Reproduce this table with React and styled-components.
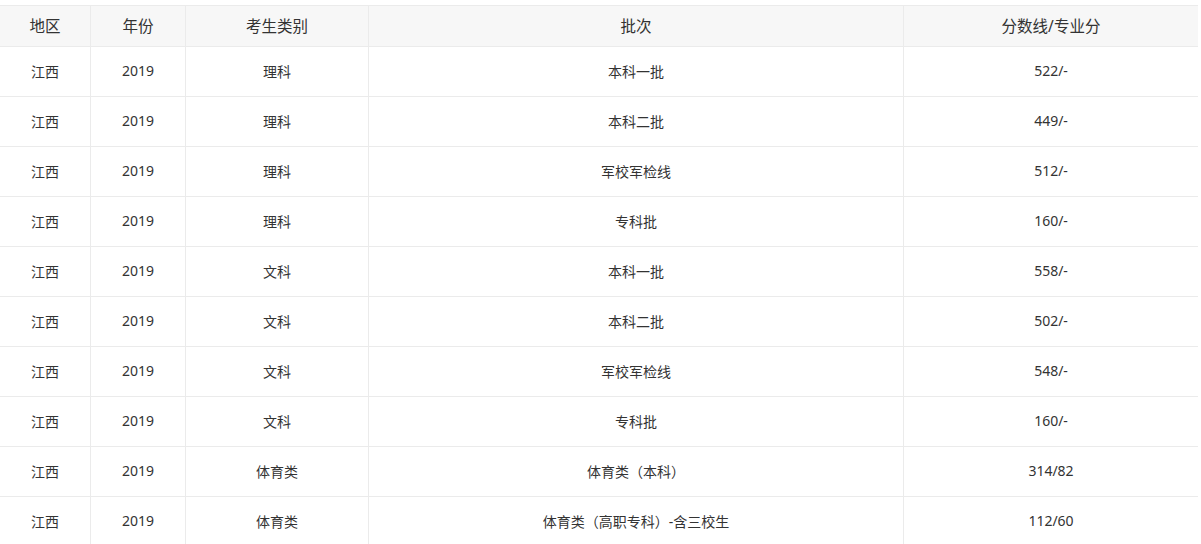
import React from "react";
import styled, { createGlobalStyle } from "styled-components";

const Global = createGlobalStyle`
  html, body { margin: 0; padding: 0; background: #fff; }
  body { font-family: "Noto Sans", "Noto Sans CJK SC", sans-serif; color: #333; }
`;

const Wrap = styled.div`
  padding-top: 5px;
  width: 1198px;
  overflow: hidden;
`;

const Table = styled.table`
  border-collapse: collapse;
  table-layout: fixed;
  width: 1199px;
  margin-left: -1px;
`;

const HeadCell = styled.th`
  height: 38px;
  padding: 0 0 2px;
  background: #f7f7f7;
  border: 1px solid #ebebeb;
  font-weight: normal;
  font-size: 15.5px;
  color: #333;
  text-align: center;
  vertical-align: middle;
`;

const Cell = styled.td`
  height: 47px;
  padding: 0 0 2px;
  border: 1px solid #ebebeb;
  font-size: 14px;
  color: #333;
  text-align: center;
  vertical-align: middle;
`;

const cols = [91, 95, 183, 535, 295];
const heads = ["地区", "年份", "考生类别", "批次", "分数线/专业分"];

const rows = [
  ["理科", "本科一批", "522/-"],
  ["理科", "本科二批", "449/-"],
  ["理科", "军校军检线", "512/-"],
  ["理科", "专科批", "160/-"],
  ["文科", "本科一批", "558/-"],
  ["文科", "本科二批", "502/-"],
  ["文科", "军校军检线", "548/-"],
  ["文科", "专科批", "160/-"],
  ["体育类", "体育类（本科）", "314/82"],
  ["体育类", "体育类（高职专科）-含三校生", "112/60"],
];

export default function App() {
  return (
    <>
      <Global />
      <Wrap>
        <Table>
          <colgroup>
            {cols.map((w, i) => (
              <col key={i} style={{ width: w }} />
            ))}
          </colgroup>
          <thead>
            <tr>
              {heads.map((h) => (
                <HeadCell key={h}>{h}</HeadCell>
              ))}
            </tr>
          </thead>
          <tbody>
            {rows.map((r, i) => (
              <tr key={i}>
                <Cell>江西</Cell>
                <Cell>2019</Cell>
                <Cell>{r[0]}</Cell>
                <Cell>{r[1]}</Cell>
                <Cell>{r[2]}</Cell>
              </tr>
            ))}
          </tbody>
        </Table>
      </Wrap>
    </>
  );
}
